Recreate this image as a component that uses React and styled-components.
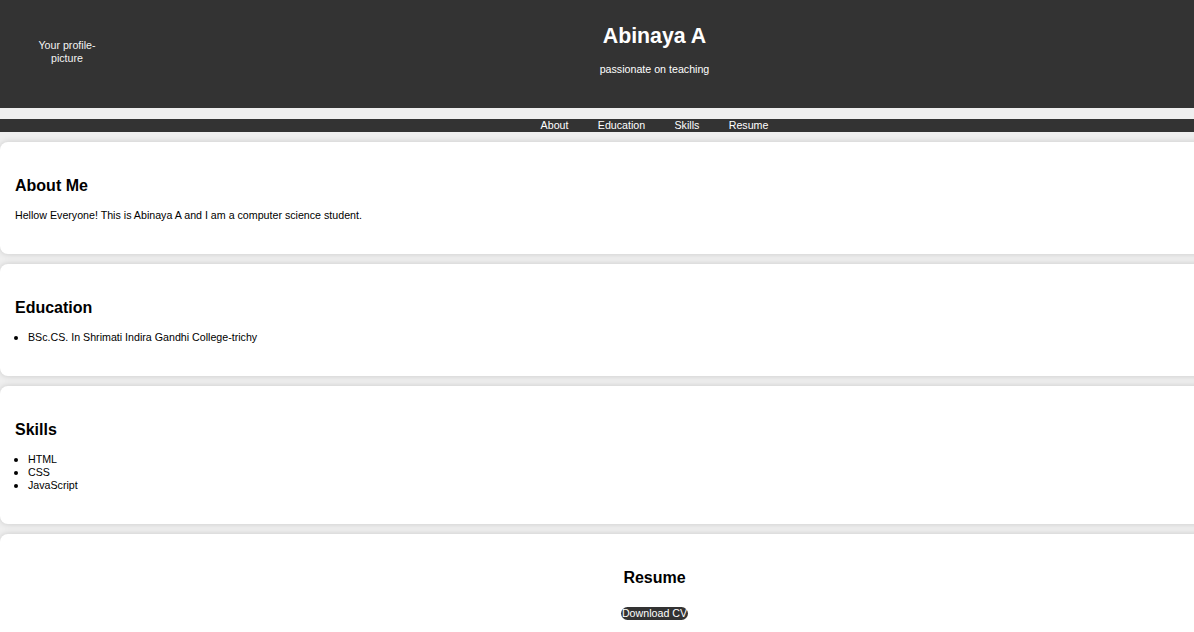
import React from "react";
import styled, { createGlobalStyle } from "styled-components";

const GlobalStyle = createGlobalStyle`
  html, body {
    margin: 0;
    padding: 0;
    overflow: hidden;
    background: #efefef;
    font-family: "Liberation Sans", Arial, sans-serif;
    font-size: 10.67px;
    color: #000;
  }
  * { box-sizing: border-box; }
`;

const Page = styled.div`
  width: 1309px;
`;

const Header = styled.header`
  display: grid;
  grid-template-columns: 1fr auto 1fr;
  height: 108px;
  background: #333;
  color: #fff;
`;

const ProfilePic = styled.div`
  justify-self: start;
  align-self: center;
  margin: 0 0 5px 26px;
  width: 82px;
  height: 80px;
  border-radius: 50%;
  display: flex;
  align-items: center;
  justify-content: center;
  text-align: center;
  line-height: 13px;
  color: #f2f2f2;
`;

const TitleBlock = styled.div`
  text-align: center;
`;

const Name = styled.h1`
  margin: 24px 0 15px;
  font-size: 21.33px;
  line-height: 24px;
  font-weight: bold;
`;

const Tagline = styled.p`
  margin: 0;
  line-height: 13px;
`;

const Nav = styled.nav`
  margin-top: 11px;
  height: 13px;
  background: #333;
  display: flex;
  justify-content: center;
`;

const NavLink = styled.a`
  color: #fff;
  text-decoration: none;
  line-height: 13px;
  padding: 0 14.67px;
`;

const Main = styled.main`
  display: flex;
  flex-direction: column;
  gap: 10px;
  padding-top: 10px;
`;

const Card = styled.section`
  background: #fff;
  border-radius: 8px;
  box-shadow: 0 0 6px rgba(0, 0, 0, 0.16);
  padding: 20px 15px 21px;
  text-align: ${(p) => (p.$center ? "center" : "left")};
`;

const CardTitle = styled.h2`
  margin: 14px 0 13px;
  font-size: 16px;
  line-height: 20px;
  font-weight: bold;
`;

const Text = styled.p`
  margin: 0 0 11px;
  line-height: 13px;
`;

const List = styled.ul`
  margin: 0 0 11px;
  padding-left: 13px;
  line-height: 13px;
  li::marker {
    font-size: 12px;
  }
`;

const Action = styled.p`
  margin: 19px 0 11px;
  line-height: 13px;
`;

const DownloadButton = styled.a`
  display: inline-block;
  background: #333;
  color: #fff;
  text-decoration: none;
  border-radius: 7px;
  padding: 0 1px;
  line-height: 13px;
`;

export default function App() {
  return (
    <Page>
      <GlobalStyle />
      <Header>
        <ProfilePic>Your profile-picture</ProfilePic>
        <TitleBlock>
          <Name>Abinaya A</Name>
          <Tagline>passionate on teaching</Tagline>
        </TitleBlock>
        <div />
      </Header>
      <Nav>
        <NavLink href="#about">About</NavLink>
        <NavLink href="#education">Education</NavLink>
        <NavLink href="#skills">Skills</NavLink>
        <NavLink href="#resume">Resume</NavLink>
      </Nav>
      <Main>
        <Card id="about">
          <CardTitle>About Me</CardTitle>
          <Text>Hellow Everyone! This is Abinaya A and I am a computer science student.</Text>
        </Card>
        <Card id="education">
          <CardTitle>Education</CardTitle>
          <List>
            <li>BSc.CS. In Shrimati Indira Gandhi College-trichy</li>
          </List>
        </Card>
        <Card id="skills">
          <CardTitle>Skills</CardTitle>
          <List>
            <li>HTML</li>
            <li>CSS</li>
            <li>JavaScript</li>
          </List>
        </Card>
        <Card id="resume" $center>
          <CardTitle>Resume</CardTitle>
          <Action>
            <DownloadButton href="#">Download CV</DownloadButton>
          </Action>
        </Card>
      </Main>
    </Page>
  );
}
